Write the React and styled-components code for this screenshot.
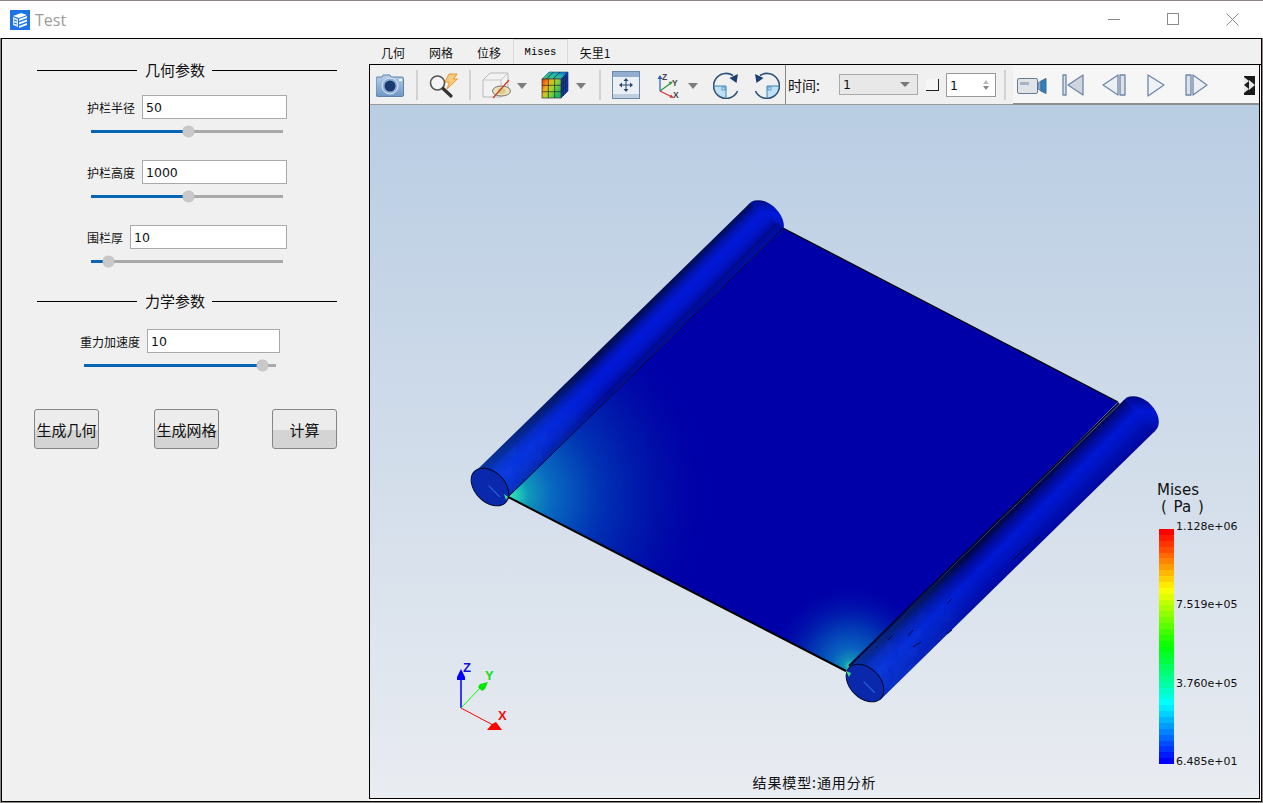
import React from "react";
import styled, { createGlobalStyle } from "styled-components";

const GlobalStyle = createGlobalStyle`
  html, body { margin: 0; padding: 0; background: #fff; overflow: hidden; }
  body { font-family: "Noto Sans CJK SC", "Liberation Sans", sans-serif; color: #111; }
  * { box-sizing: border-box; }
`;

const cjk = `"Noto Sans CJK SC", sans-serif`;
const mono = `"Liberation Mono", "Noto Sans CJK SC", monospace`;
const digits = `"DejaVu Sans", sans-serif`;

const Window = styled.div`
  width: 1263px;
  height: 803px;
  display: flex;
  flex-direction: column;
  background: #8c8480;
  border-top: 1px solid #8c8480;
  border-bottom: 1px solid #8c8480;
  padding: 0 1px;
`;

const TitleBar = styled.div`
  height: 37px;
  flex: none;
  display: flex;
  align-items: center;
  margin: 0 -1px;
  padding-left: 10px;
  background: #fff;
`;

const TitleText = styled.span`
  margin-left: 5px;
  font: 16px "Open Sans", sans-serif;
  color: #9c9c9c;
`;

const WindowButtons = styled.div`
  margin-left: auto;
  display: flex;
  margin-right: 24px;
  gap: 46px;
`;

const Body = styled.div`
  flex: 1;
  display: flex;
  min-height: 0;
  background: #f0f0f0;
  border: 1px solid #000;
`;

const SidePanel = styled.div`
  width: 367px;
  flex: none;
  padding: 21px 0 0 0;
`;

const GroupTitle = styled.div`
  width: 300px;
  height: 20px;
  margin: ${(p) => p.$top || 0}px 0 0 35px;
  display: flex;
  align-items: center;
  font-size: 15px;
  line-height: 20px;
  gap: 8px;
  &::before, &::after { content: ""; height: 1px; background: #000; }
  &::before { width: 100px; }
  &::after { flex: 1; margin-left: -1px; }
`;

const InputRow = styled.div`
  width: ${(p) => p.$right}px;
  height: 24px;
  margin-top: ${(p) => p.$top}px;
  display: flex;
  justify-content: flex-end;
  align-items: center;
  gap: 7px;
`;

const Label = styled.label`
  font-size: 12px;
  white-space: nowrap;
`;

const ValueBox = styled.div`
  height: 24px;
  width: ${(p) => p.$w}px;
  background: #fff;
  border: 1px solid #a9a9a9;
  font: 12.5px/23px ${digits};
  padding-left: 3px;
`;

const Track = styled.div`
  position: relative;
  width: 192px;
  height: 3px;
  margin: 11px 0 0 ${(p) => p.$left}px;
  background: #a9a9a9;
`;

const TrackFill = styled.div`
  height: 3px;
  background: #0a64b4;
  width: ${(p) => p.$value}%;
`;

const Thumb = styled.div`
  position: absolute;
  top: -4px;
  left: calc(${(p) => p.$value}% - 5px);
  width: 11px;
  height: 11px;
  border-radius: 50%;
  background: #c9c9c9;
  box-shadow: 0 0 0 0.5px #bbb;
`;

const ButtonRow = styled.div`
  margin: 42px 0 0 32px;
  width: 303px;
  display: flex;
  gap: 55px;
`;

const Button = styled.button`
  width: 65px;
  height: 40px;
  padding: 0;
  font: 15px ${cjk};
  color: #111;
  border: 1px solid #858585;
  border-radius: 3px;
  background: linear-gradient(#ececec 0 52%, #d4d4d4 52% 100%);
  &:last-child { margin-left: -2px; }
`;

const Main = styled.div`
  flex: 1;
  min-width: 0;
  display: flex;
  flex-direction: column;
  padding: 0 1px 2px 0;
`;

const TabBar = styled.div`
  height: 26px;
  flex: none;
  display: flex;
  align-items: flex-end;
  border-bottom: 1px solid #000;
  margin-right: -1px;
`;

const Tab = styled.div`
  height: ${(p) => (p.$active ? 25 : 22)}px;
  width: ${(p) => p.$w}px;
  display: flex;
  align-items: center;
  justify-content: center;
  font: 12px/1 ${cjk};
  background: #f0f0f0;
  ${(p) => p.$active && `border: 1px solid #d9d9d9; border-bottom: 0;`}
`;

const TabLatin = styled.span`
  font: 10.5px ${mono};
  color: #000;
  letter-spacing: 0.1px;
`;

const Content = styled.div`
  flex: 1;
  min-height: 0;
  display: flex;
  flex-direction: column;
  border: 1px solid #000;
  border-top: 0;
  box-shadow: 1px 2px 0 #fff;
`;

const Toolbar = styled.div`
  height: 40px;
  flex: none;
  display: flex;
  align-items: center;
  background: #f0f0f0;
  border-bottom: 1px solid #9a9a9a;
  padding-left: 1px;
`;

const Tool = styled.svg`
  flex: none;
  display: block;
  margin-left: ${(p) => p.$ml}px;
`;

const Sep = styled.div`
  flex: none;
  align-self: ${(p) => (p.$tall ? "stretch" : "center")};
  height: ${(p) => (p.$tall ? "auto" : "30px")};
  width: ${(p) => (p.$tall ? 1 : 2)}px;
  margin-left: ${(p) => p.$ml}px;
  background: ${(p) => (p.$tall ? "#8a8a8a" : "#d2d2d2")};
`;

const TimeLabel = styled.span`
  flex: none;
  width: 51px;
  margin-left: 2px;
  font: 14px/1 ${cjk};
`;

const Combo = styled.div`
  flex: none;
  width: 79px;
  height: 21px;
  display: flex;
  align-items: center;
  justify-content: space-between;
  padding: 0 7px 0 3px;
  background: #e8e8e8;
  border: 1px solid #aaa;
  font: 12.5px ${digits};
  &::after {
    content: "";
    border: 4px solid transparent;
    border-top: 5px solid #777;
    border-bottom: 0;
    border-left-width: 5px;
    border-right-width: 5px;
  }
`;

const CheckBox = styled.div`
  flex: none;
  width: 13px;
  height: 12px;
  margin: 1px 0 0 8px;
  background: #f6f6f6;
  border-right: 1px solid #222;
  border-bottom: 1px solid #222;
`;

const Spin = styled.div`
  flex: none;
  position: relative;
  width: 50px;
  height: 24px;
  margin-left: 7px;
  background: #fff;
  border: 1px solid #999;
  font: 12.5px/23px ${digits};
  padding-left: 3px;
  &::before, &::after {
    content: "";
    position: absolute;
    right: 6px;
    border-left: 3px solid transparent;
    border-right: 3px solid transparent;
  }
  &::before { top: 6px; border-bottom: 4px solid #bbb; }
  &::after { bottom: 6px; border-top: 4px solid #888; }
`;

const MediaStrip = styled.div`
  flex: 1;
  align-self: stretch;
  margin: 1px 0 -1px 7px;
  display: flex;
  align-items: center;
  background: #f6f6f6;
  border-bottom: 2px solid #8d8d8d;
`;

const Viewport = styled.div`
  position: relative;
  flex: 1;
  min-height: 0;
  background: linear-gradient(#b9cde3, #e9ecf1);
`;

const Scene = styled.svg`
  display: block;
  width: 100%;
  height: 100%;
`;

const Legend = styled.div`
  position: absolute;
  left: 785px;
  top: 376px;
  width: 84px;
  font: 11px "DejaVu Sans", sans-serif;
  color: #111;
`;

const LegendTitle = styled.div`
  font: 15px/17px "DejaVu Sans", sans-serif;
  padding: 1px 0 0 2px;
`;

const LegendUnit = styled.div`
  padding-left: 4px;
  word-spacing: 2px;
`;

const LegendBody = styled.div`
  display: flex;
  margin-top: 13px;
  padding-left: 4px;
`;

const Bar = styled.div`
  width: 15px;
  height: 235px;
  display: flex;
  flex-direction: column;
`;

const Band = styled.div`
  flex: 1;
`;

const Ticks = styled.div`
  margin: -10px 0 -6px 2px;
  display: flex;
  flex-direction: column;
  justify-content: space-between;
  line-height: 16px;
`;

const Caption = styled.div`
  position: absolute;
  left: 0;
  right: 0;
  bottom: 6px;
  text-align: center;
  font: 14px/20px ${cjk};
  letter-spacing: 0.9px;
  color: #111;
`;

// rainbow used by the result legend, red on top to blue at the bottom
const bandColor = (t) => {
  const stops = [[255, 0, 0], [255, 255, 0], [0, 255, 0], [0, 255, 255], [0, 0, 255]];
  const p = t * 4;
  const i = Math.min(3, Math.floor(p));
  const f = p - i;
  const c = stops[i].map((v, k) => Math.round(v + (stops[i + 1][k] - v) * f));
  return `rgb(${c.join(",")})`;
};
const bands = Array.from({ length: 40 }, (_, i) => bandColor(i / 39));

const Icon = ({ w, ml, children }) => (
  <Tool width={w} height={28} viewBox={`0 0 ${w} 28`} $ml={ml}>
    {children}
  </Tool>
);

const DropArrow = ({ ml }) => (
  <Icon w={10} ml={ml}>
    <path d="M0 12h10l-5 6z" fill="#7d7d7d" />
  </Icon>
);

const CameraIcon = ({ ml }) => (
  <Icon w={28} ml={ml}>
    <defs>
      <linearGradient id="camBody" x1="0" y1="0" x2="0" y2="1">
        <stop offset="0" stopColor="#b8d0ea" />
        <stop offset="1" stopColor="#6f97c4" />
      </linearGradient>
    </defs>
    <path d="M1 6h5l1-2h7l1 2h11a1.500 1.500 0 0 1 1.500 1.500V24a1.500 1.500 0 0 1-1.500 1.500H1.500A1.500 1.500 0 0 1 0 24V7a1 1 0 0 1 1-1z" fill="url(#camBody)" stroke="#5d83ad" />
    <circle cx="14" cy="15" r="8" fill="#8eaed2" stroke="#dbe8f5" />
    <circle cx="14" cy="15" r="5.500" fill="#1b3a72" />
    <rect x="23" y="8" width="3" height="2" fill="#edf4fb" />
  </Icon>
);

const SearchIcon = ({ ml }) => (
  <Icon w={30} ml={ml}>
    <path d="M20 3h8l-3.500 5h4L18 18l2.500-7H16z" fill="#f8cc80" stroke="#e89428" strokeWidth="1" />
    <circle cx="8.500" cy="12" r="7" fill="#f4f6f8" fillOpacity=".7" stroke="#555" strokeWidth="1.600" />
    <path d="M14 17.500l8 7.500" stroke="#333" strokeWidth="3.200" strokeLinecap="round" />
  </Icon>
);

const HideIcon = ({ ml }) => (
  <Icon w={29} ml={ml}>
    <path d="M1 9L8 2h18v16l-7 8H1z" fill="#f2f2f2" stroke="#b8b8b8" />
    <path d="M1 9h18v17M19 9l7-7" fill="none" stroke="#c4c4c4" />
    <ellipse cx="19.500" cy="20" rx="9" ry="5" fill="#ece2b8" stroke="#777" />
    <ellipse cx="19.500" cy="20" rx="4" ry="3" fill="#dcc888" />
    <path d="M11 27L27 9" stroke="#c83a20" strokeWidth="1.200" />
  </Icon>
);

const ColorCubeIcon = ({ ml }) => (
  <Icon w={28} ml={ml}>
    <defs>
      <linearGradient id="cubeFront" x1="0" y1="0" x2="1" y2=".6">
        <stop offset="0" stopColor="#e82818" />
        <stop offset=".35" stopColor="#f0b018" />
        <stop offset=".6" stopColor="#a0d830" />
        <stop offset="1" stopColor="#18b868" />
      </linearGradient>
      <linearGradient id="cubeTop" x1="0" y1="1" x2="1" y2="0">
        <stop offset="0" stopColor="#50c860" />
        <stop offset=".6" stopColor="#20b0b0" />
        <stop offset="1" stopColor="#1050d0" />
      </linearGradient>
    </defs>
    <path d="M1 8L8 1h19l-7 7z" fill="url(#cubeTop)" stroke="#1a5a70" strokeWidth=".6" />
    <path d="M20 8l7-7v19l-7 7z" fill="#0c3ab0" stroke="#0a2a78" strokeWidth=".6" />
    <rect x="1" y="8" width="19" height="19" fill="url(#cubeFront)" stroke="#333" strokeWidth=".7" />
    <path d="M7.300 8v19M13.700 8v19M1 14.300h19M1 20.700h19M22.300 6v19M24.700 3.500v19M20 14l7-7M20 20.500l7-7M5.500 8l7-7M12 8l7-7" stroke="#222" strokeWidth=".7" fill="none" />
  </Icon>
);

const MoveIcon = ({ ml }) => (
  <Icon w={28} ml={ml}>
    <rect x=".5" y=".5" width="27" height="27" fill="#eaf0f6" stroke="#6a88a8" />
    <rect x="1" y="1" width="26" height="5" fill="#93add0" />
    <rect x="1" y="23" width="26" height="4" fill="#c0cfe0" />
    <path d="M14 9v10M9 14h10" stroke="#29456a" strokeWidth="1" />
    <path d="M14 7l-2.500 3h5zM14 21l-2.500-3h5zM7 14l3-2.500v5zM21 14l-3-2.500v5z" fill="#29456a" />
  </Icon>
);

const AxisIcon = ({ ml }) => (
  <Icon w={25} ml={ml}>
    <path d="M4 20V7" stroke="#2a5cc0" strokeWidth="1.200" />
    <path d="M4 4l-2.500 4h5z" fill="#2a5cc0" />
    <path d="M4 20L15 12" stroke="#2a9a40" strokeWidth="1.200" />
    <path d="M17 10.500l-4.500 .5 2 3z" fill="#2a9a40" />
    <path d="M4 20l12 6" stroke="#d83030" strokeWidth="1.200" />
    <path d="M18 27l-4.500-.5 1.500-3z" fill="#d83030" />
    <text x="6" y="9" fontFamily="Liberation Sans" fontSize="8.500" fontWeight="bold" fill="#444">Z</text>
    <text x="16" y="15" fontFamily="Liberation Sans" fontSize="8.500" fontWeight="bold" fill="#444">Y</text>
    <text x="17" y="26.500" fontFamily="Liberation Sans" fontSize="8.500" fontWeight="bold" fill="#444">X</text>
  </Icon>
);

const RotateIcon = ({ ml, flip }) => (
  <Icon w={27} ml={ml}>
    <g transform={flip ? "translate(27 0) scale(-1 1)" : undefined}>
      <path d="M1 15h12v12A12 12 0 0 1 1 15z" fill="#bfdff2" />
      <path d="M1 15h12v12" fill="none" stroke="#3a86b8" />
      <rect x="9" y="16" width="3" height="3" fill="none" stroke="#3a86b8" strokeWidth=".7" />
      <path d="M24.500 20A12.500 12.500 0 1 1 20 4.500" fill="none" stroke="#2e5278" strokeWidth="1.600" />
      <path d="M25 3l-1.500 9-7-5z" fill="#1d3f70" />
    </g>
  </Icon>
);

const media = { fill: "#dde1e8", stroke: "#6f86a8", strokeWidth: 1.300, strokeLinejoin: "round" };

const VideoIcon = ({ ml }) => (
  <Icon w={30} ml={ml}>
    <rect x=".5" y="7.500" width="20" height="15" rx="1.500" fill="#dfe2e6" stroke="#6a7c94" />
    <rect x="3" y="11" width="9" height="3" fill="#a8b2c0" />
    <path d="M21 12l3-2v10l-3-2z" fill="#88b0d8" stroke="#4a6a90" strokeWidth=".8" />
    <path d="M24 10l5-2.500v15L24 20z" fill="#2f80c0" stroke="#406a90" />
  </Icon>
);

const FirstIcon = ({ ml }) => (
  <Icon w={22} ml={ml}>
    <rect x="1" y="4" width="3" height="20" {...media} />
    <path d="M21 4L6 14l15 10z" {...media} fill="#cfd5de" />
  </Icon>
);

const PrevIcon = ({ ml }) => (
  <Icon w={24} ml={ml}>
    <path d="M16 4L1 14l15 10z" {...media} fill="#eceff3" />
    <rect x="18" y="4" width="5" height="20" {...media} />
  </Icon>
);

const PlayIcon = ({ ml }) => (
  <Icon w={18} ml={ml}>
    <path d="M1 4l16 10L1 25z" {...media} fill="#eef1f5" />
  </Icon>
);

const NextIcon = ({ ml }) => (
  <Icon w={23} ml={ml}>
    <rect x="1" y="4" width="5" height="20" {...media} />
    <path d="M8 4l14 10L8 24z" {...media} fill="#eceff3" />
  </Icon>
);

const OverflowIcon = ({ ml }) => (
  <Icon w={12} ml={ml}>
    <rect x="0" y="5" width="11" height="19" fill="#1a1a1a" />
    <path d="M0 6l5 4-5 4zM0 14l5 4-5 4zM5 9l6 5-6 5z" fill="#e8e8e8" />
  </Icon>
);

const Logo = () => (
  <svg width="20" height="20" viewBox="0 0 20 20">
    <rect width="20" height="20" fill="#1b73e8" />
    <path d="M3 6l8-3 6 2-8 3z" fill="#fff" />
    <path d="M3 7l5 2v8l-5-2z" fill="#dce9fb" />
    <path d="M9 9l8-3v2l-8 3zM9 12.500l8-3v2l-8 3zM9 16l8-3v2l-8 3z" fill="#fff" />
    <path d="M4 10l3 1M4 13l3 1" stroke="#1b73e8" />
  </svg>
);

const MinimizeGlyph = () => (
  <svg width="13" height="13" viewBox="0 0 13 13"><path d="M0 6.500h12" stroke="#8a8a8a" /></svg>
);
const MaximizeGlyph = () => (
  <svg width="13" height="13" viewBox="0 0 13 13"><rect x=".5" y=".5" width="11" height="11" fill="none" stroke="#8a8a8a" /></svg>
);
const CloseGlyph = () => (
  <svg width="13" height="13" viewBox="0 0 13 13"><path d="M.5 .5l12 12M12.500 .5l-12 12" stroke="#8a8a8a" /></svg>
);

const Slider = ({ left, value }) => (
  <Track $left={left}>
    <TrackFill $value={value} />
    <Thumb $value={value} />
  </Track>
);

// mesh facets near the loaded end of a tube: u runs along the axis, v across it
const facetsFor = (near) => {
  const out = [];
  const pt = (u, v) => `${(near[0] + u * 0.716 + v * 0.698).toFixed(1)},${(near[1] - u * 0.698 + v * 0.716).toFixed(1)}`;
  for (let u = 0; u < 110; u += 16) {
    for (let v = -12; v < 20; v += 10) {
      const shade = ((u / 16 + (v + 12) / 10) % 3) * 0.05 * (1 - u / 130);
      out.push({ p: `${pt(u, v)} ${pt(u + 16, v)} ${pt(u + 8, v + 10)}`, o: shade + 0.03 });
      out.push({ p: `${pt(u + 16, v)} ${pt(u + 24, v + 10)} ${pt(u + 8, v + 10)}`, o: 0.09 * (1 - u / 130) - shade / 3 });
    }
  }
  return out;
};

const Cylinder = ({ id, points, far, near, grad, stops, glow }) => (
  <g>
    <defs>
      <linearGradient id={id} gradientUnits="userSpaceOnUse" x1={grad[0]} y1={grad[1]} x2={grad[2]} y2={grad[3]}>
        {stops.map(([o, c]) => (
          <stop key={o} offset={o} stopColor={c} />
        ))}
      </linearGradient>
      <linearGradient id={`${id}Glow`} gradientUnits="userSpaceOnUse" x1={near[0]} y1={near[1]} x2={near[0] + 110} y2={near[1] - 107}>
        <stop offset="0" stopColor={glow} stopOpacity=".55" />
        <stop offset="1" stopColor={glow} stopOpacity="0" />
      </linearGradient>
      <clipPath id={`${id}Clip`}>
        <polygon points={points} />
      </clipPath>
    </defs>
    <ellipse cx={far[0]} cy={far[1]} rx="22" ry="15" transform={`rotate(45 ${far[0]} ${far[1]})`} fill={`url(#${id})`} />
    <polygon points={points} fill={`url(#${id})`} />
    <polygon points={points} fill={`url(#${id}Glow)`} />
    <g clipPath={`url(#${id}Clip)`}>
      {facetsFor(near).map((f, i) => (
        <polygon key={i} points={f.p} fill="#2a68f0" fillOpacity={Math.max(0, f.o)} />
      ))}
    </g>
  </g>
);

const Disc = ({ c }) => (
  <g transform={`rotate(45 ${c[0]} ${c[1]})`}>
    <ellipse cx={c[0]} cy={c[1]} rx="22" ry="15" fill="#0a28ac" stroke="#00082a" strokeWidth="1" />
    <path d={`M${c[0] - 2} ${c[1]}L${c[0] + 14} ${c[1]}`} stroke="#2a6ae0" strokeWidth="1" />
  </g>
);

const Model = () => (
  <g>
    <defs>
      <radialGradient id="leftHot" gradientUnits="userSpaceOnUse" cx="510" cy="495" r="210">
        <stop offset="0" stopColor="#30e8b8" />
        <stop offset=".04" stopColor="#20c8b8" />
        <stop offset=".09" stopColor="#1098b8" />
        <stop offset=".2" stopColor="#0868c0" />
        <stop offset=".42" stopColor="#0034b4" />
        <stop offset=".72" stopColor="#0014a8" stopOpacity=".7" />
        <stop offset="1" stopColor="#0000a8" stopOpacity="0" />
      </radialGradient>
      <radialGradient id="rightHot" gradientUnits="userSpaceOnUse" cx="850" cy="666" r="85">
        <stop offset="0" stopColor="#30e0b0" />
        <stop offset=".07" stopColor="#1090b8" />
        <stop offset=".22" stopColor="#0860c0" />
        <stop offset=".55" stopColor="#0028b0" />
        <stop offset="1" stopColor="#0000a8" stopOpacity="0" />
      </radialGradient>
      <clipPath id="plateClip">
        <polygon points="783,228 1118,402 846,671 508,497" />
      </clipPath>
    </defs>
    <polygon points="783,228 1118,402 846,671 508,497" fill="#0000a8" />
    <g clipPath="url(#plateClip)">
      <rect x="500" y="220" width="630" height="460" fill="url(#leftHot)" />
      <rect x="500" y="220" width="630" height="460" fill="url(#rightHot)" />
    </g>

    <Cylinder
      id="cylA"
      points="475,472 750,203 783,228 508,497 505,503"
      far={[765, 219]}
      near={[490, 487]}
      grad={[615, 336, 643.5, 364.5]}
      glow="#1058e8"
      stops={[
        [0, "#000c50"],
        [0.12, "#000f72"],
        [0.2, "#0012a4"],
        [0.42, "#0018d8"],
        [0.64, "#0016c8"],
        [0.8, "#000eb0"],
        [0.86, "#000c8c"],
        [1, "#000ca8"],
      ]}
    />
    <Cylinder
      id="cylB"
      points="849,667 1124,400 1155,431 880,700"
      far={[1140, 415]}
      near={[865, 683]}
      grad={[983, 535, 1015.5, 567.5]}
      glow="#1050e0"
      stops={[
        [0, "#000a40"],
        [0.1, "#000850"],
        [0.17, "#000a80"],
        [0.28, "#000ca4"],
        [0.48, "#0018d4"],
        [0.72, "#0012bc"],
        [1, "#0008a0"],
      ]}
    />

    <path d="M508 497L783 228" stroke="#05052a" strokeWidth="1" fill="none" />
    <path d="M783 228L1118 402" stroke="#000" strokeWidth="1.200" fill="none" />
    <path d="M508 497L846 671" stroke="#000" strokeWidth="2" fill="none" />
    <path d="M849 666L1119 403" stroke="#000530" strokeWidth="2" fill="none" />
    <path d="M888 640l5-5M908 636l5-6M913 647l8-5M947 604l5-5M952 630l-5 4M1013 560l18-17M1034 542l6-5" stroke="#000a30" strokeWidth="1" fill="none" />

    <Disc c={[490, 487]} />
    <Disc c={[865, 683]} />
    <path d="M508 497l-4-3 2 6z" fill="#40e090" />
    <path d="M846 671l5 2-2 4z" fill="#40e090" />
  </g>
);

const Triad = () => (
  <g>
    <path d="M461 708V678" stroke="#0000ff" strokeWidth="1.500" />
    <path d="M461 669l-4 8v3h8v-3z" fill="#0000ff" />
    <path d="M461 708L482 686" stroke="#00ff00" strokeWidth="1" />
    <path d="M488 682l-8 2-2 3 4 4 3-2z" fill="#00e800" />
    <path d="M461 708L493 725" stroke="#ff0000" strokeWidth="1" />
    <path d="M497 722l-4 2-5 6h15z" fill="#ff0000" transform="translate(-1 0)" />
    <text x="463" y="672" fontFamily="Liberation Sans" fontSize="13" fontWeight="bold" fill="#1010e0">Z</text>
    <text x="485" y="680" fontFamily="Liberation Sans" fontSize="13" fontWeight="bold" fill="#10e010">Y</text>
    <text x="498" y="720" fontFamily="Liberation Sans" fontSize="13" fontWeight="bold" fill="#f01010">X</text>
  </g>
);

const App = () => (
  <Window>
    <GlobalStyle />
    <TitleBar>
      <Logo />
      <TitleText>Test</TitleText>
      <WindowButtons>
        <MinimizeGlyph />
        <MaximizeGlyph />
        <CloseGlyph />
      </WindowButtons>
    </TitleBar>
    <Body>
      <SidePanel>
        <GroupTitle>几何参数</GroupTitle>
        <InputRow $right={285} $top={15}>
          <Label>护栏半径</Label>
          <ValueBox $w={145}>50</ValueBox>
        </InputRow>
        <Slider left={89} value={50.5} />
        <InputRow $right={285} $top={27}>
          <Label>护栏高度</Label>
          <ValueBox $w={145}>1000</ValueBox>
        </InputRow>
        <Slider left={89} value={50.5} />
        <InputRow $right={285} $top={27}>
          <Label>围栏厚</Label>
          <ValueBox $w={157}>10</ValueBox>
        </InputRow>
        <Slider left={89} value={9} />
        <GroupTitle $top={28}>力学参数</GroupTitle>
        <InputRow $right={278} $top={18}>
          <Label>重力加速度</Label>
          <ValueBox $w={133}>10</ValueBox>
        </InputRow>
        <Slider left={82} value={92.7} />
        <ButtonRow>
          <Button>生成几何</Button>
          <Button>生成网格</Button>
          <Button>计算</Button>
        </ButtonRow>
      </SidePanel>
      <Main>
        <TabBar>
          <Tab $w={48}>几何</Tab>
          <Tab $w={48}>网格</Tab>
          <Tab $w={48}>位移</Tab>
          <Tab $w={55} $active><TabLatin>Mises</TabLatin></Tab>
          <Tab $w={54}>矢里1</Tab>
        </TabBar>
        <Content>
          <Toolbar>
            <CameraIcon ml={5} />
            <Sep $ml={12} />
            <SearchIcon ml={11} />
            <Sep $ml={10} />
            <HideIcon ml={11} />
            <DropArrow ml={6} />
            <ColorCubeIcon ml={14} />
            <DropArrow ml={7} />
            <Sep $ml={13} />
            <MoveIcon ml={11} />
            <AxisIcon ml={16} />
            <DropArrow ml={7} />
            <RotateIcon ml={15} />
            <RotateIcon ml={13} flip />
            <Sep $ml={5} $tall />
            <TimeLabel>时间:</TimeLabel>
            <Combo>1</Combo>
            <CheckBox />
            <Spin>1</Spin>
            <Sep $ml={8} />
            <MediaStrip>
              <VideoIcon ml={4} />
              <FirstIcon ml={15} />
              <PrevIcon ml={18} />
              <PlayIcon ml={21} />
              <NextIcon ml={20} />
              <OverflowIcon ml={36} />
            </MediaStrip>
          </Toolbar>
          <Viewport>
            <Scene viewBox="370 105 889 693" preserveAspectRatio="none">
              <Model />
              <Triad />
            </Scene>
            <Legend>
              <LegendTitle>
                Mises
                <LegendUnit>( Pa )</LegendUnit>
              </LegendTitle>
              <LegendBody>
                <Bar>
                  {bands.map((c, i) => (
                    <Band key={i} style={{ background: c }} />
                  ))}
                </Bar>
                <Ticks>
                  <span>1.128e+06</span>
                  <span>7.519e+05</span>
                  <span>3.760e+05</span>
                  <span>6.485e+01</span>
                </Ticks>
              </LegendBody>
            </Legend>
            <Caption>结果模型:通用分析</Caption>
          </Viewport>
        </Content>
      </Main>
    </Body>
  </Window>
);

export default App;
